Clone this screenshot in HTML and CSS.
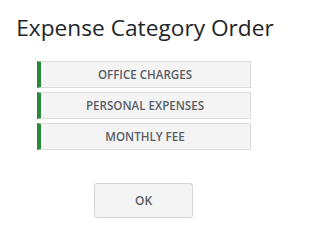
FILE: index.html
```html
<!DOCTYPE html>
<html>
<head>
<meta charset="utf-8">
<link rel="stylesheet" href="styles.css">
</head>
<body>
<div class="dialog">
  <h1 class="title">Expense Category Order</h1>
  <ul class="list">
    <li class="item">OFFICE CHARGES</li>
    <li class="item">PERSONAL EXPENSES</li>
    <li class="item">MONTHLY FEE</li>
  </ul>
  <button class="ok">OK</button>
</div>
</body>
</html>
```
FILE: styles.css
```css
html, body {
  margin: 0;
  padding: 0;
  background: #ffffff;
}
.dialog {
  width: 287px;
  display: flex;
  flex-direction: column;
  align-items: center;
  font-family: "Open Sans", "Noto Sans", sans-serif;
  padding-top: 12px;
}
.title {
  margin: 0 0 0 3px;
  font-size: 22.7px;
  font-weight: 400;
  color: #212529;
  line-height: 32px;
  white-space: nowrap;
}
.list {
  list-style: none;
  margin: 17px 0 0 0;
  padding: 0;
  width: 214px;
  display: flex;
  flex-direction: column;
  gap: 4px;
}
.item {
  height: 25px;
  box-sizing: content-box;
  border: 1px solid #dcdcdc;
  border-left: 4px solid #2b8a3a;
  background: #f4f4f4;
  color: #5a5f66;
  font-size: 11.6px;
  font-weight: 600;
  display: flex;
  align-items: center;
  justify-content: center;
}
.ok {
  margin-top: 33px;
  width: 99px;
  height: 35px;
  border: 1px solid #d4d4d4;
  border-radius: 3px;
  background: #f4f4f4;
  color: #5a5f66;
  font-family: "Open Sans", "Noto Sans", sans-serif;
  font-size: 12px;
  font-weight: 600;
}
```
